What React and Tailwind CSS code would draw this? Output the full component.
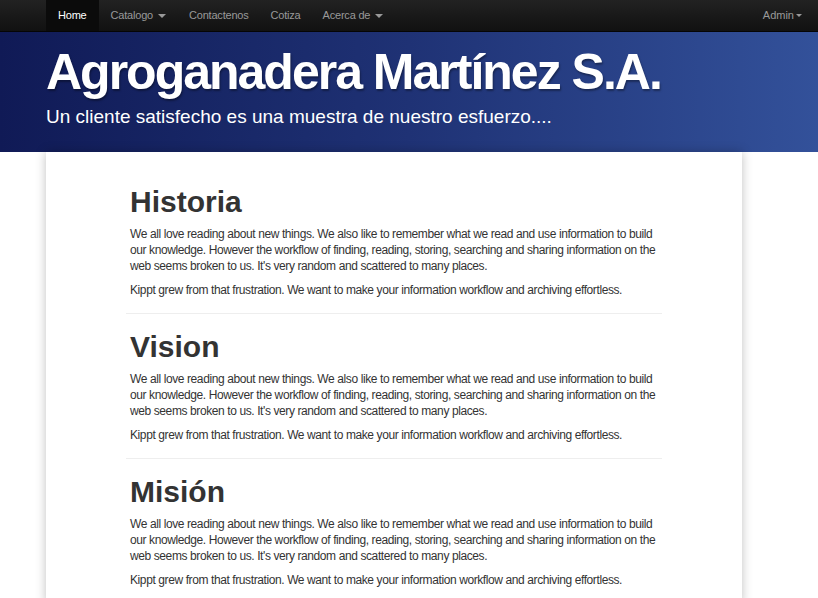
import React from 'react';

const sections = ['Historia', 'Vision', 'Misión'];

const body =
  "We all love reading about new things. We also like to remember what we read and use information to build our knowledge. However the workflow of finding, reading, storing, searching and sharing information on the web seems broken to us. It's very random and scattered to many places.";

function Caret() {
  return <span className="inline-block ml-[5px] align-middle border-x-4 border-x-transparent border-t-4 border-t-[#999]" />;
}

export default function App() {
  return (
    <div className="min-h-[598px] bg-white font-['Liberation_Sans',Arial,sans-serif]">
      {/* Navbar */}
      <div className="h-8 bg-linear-to-b from-[#222] to-[#111] border-b border-[#050505] flex items-stretch pl-[46px] pr-[16px] text-[11px] text-[#999]">
        <div className="flex items-stretch tracking-[-0.2px]">
          <a className="px-3 flex items-center bg-[#0b0b0b] text-white">Home</a>
          <a className="px-3 flex items-center">Catalogo<Caret /></a>
          <a className="px-[11px] flex items-center">Contactenos</a>
          <a className="px-[11px] flex items-center">Cotiza</a>
          <a className="px-[11px] flex items-center">Acerca de<Caret /></a>
        </div>
        <div className="ml-auto flex items-center">
          Admin<span className="inline-block ml-0.5 align-middle border-x-[3px] border-x-transparent border-t-[3px] border-t-[#999]" />
        </div>
      </div>

      {/* Header */}
      <div className="h-[120px] bg-linear-to-r from-[#101a56] via-[#1f3275] to-[#33519a] px-[46px] pt-[9px] text-white">
        <h1 className="text-[50px] leading-[62px] font-bold tracking-[-2px] [text-shadow:1px_2px_2px_rgba(0,0,0,0.35)]">
          Agroganadera Martínez S.A.
        </h1>
        <p className="text-[19px] leading-[26px] mt-[1px]">Un cliente satisfecho es una muestra de nuestro esfuerzo....</p>
      </div>

      {/* Content */}
      <div className="mx-[46px] w-[696px] bg-white shadow-[0_0_10px_rgba(0,0,0,0.25)] pt-[30px] pb-4">
        <div className="w-[528px] ml-[84px] text-[12px] leading-4 tracking-[-0.4px] text-[#333]">
          {sections.map((title, i) => (
            <div key={title}>
              {i > 0 && <hr className="border-t border-[#eee] -ml-1 -mr-1 mt-[15px] mb-[13px]" />}
              <h2 className="text-[30px] leading-[40px] font-bold tracking-normal text-[#333] mb-[4px]">{title}</h2>
              <p className="mb-2">{body}</p>
              <p>Kippt grew from that frustration. We want to make your information workflow and archiving effortless.</p>
            </div>
          ))}
        </div>
      </div>
    </div>
  );
}
